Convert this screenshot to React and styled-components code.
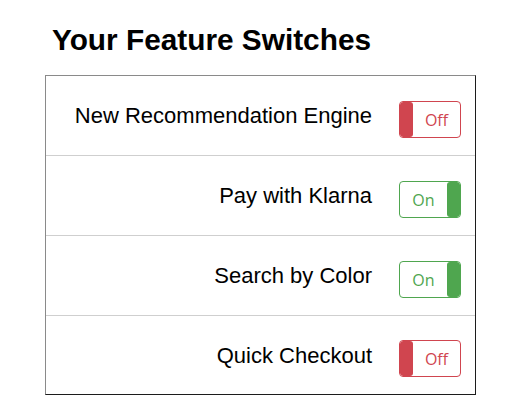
import React from 'react';
import styled, { createGlobalStyle } from 'styled-components';

const GlobalStyle = createGlobalStyle`
  body {
    margin: 0;
    background: #fff;
    font-family: "Liberation Sans", Arial, sans-serif;
    color: #000;
  }
`;

const Page = styled.div`
  padding: 24px 0 0 45px;
  width: 431px;
`;

const Title = styled.h1`
  margin: 0 0 20px 7px;
  font-size: 29.8px;
  line-height: 31px;
  font-weight: bold;
`;

const SwitchList = styled.div`
  border-style: solid;
  border-width: 1px;
  border-color: #8a8a8a #1c1c1c #1c1c1c #8a8a8a;
`;

const Row = styled.div`
  display: flex;
  align-items: center;
  justify-content: flex-end;
  gap: 27px;
  height: 79px;
  padding-right: 14px;
  border-bottom: 1px solid #cfcfcf;

  &:last-child {
    border-bottom: none;
    height: 78px;
  }
`;

const Label = styled.span`
  font-size: 22px;
  margin-top: 1px;
`;

const Toggle = styled.button`
  display: flex;
  flex-direction: ${(p) => (p.$on ? 'row-reverse' : 'row')};
  align-items: stretch;
  width: 62px;
  height: 37px;
  margin-top: 7px;
  padding: 0;
  background: #fff;
  border: 1px solid ${(p) => p.$color};
  border-radius: 4px;
  overflow: hidden;
  cursor: pointer;
`;

const Knob = styled.span`
  width: 13px;
  background: ${(p) => p.$color};
  border-radius: 3px;
`;

const ToggleText = styled.span`
  flex: 1;
  display: flex;
  align-items: center;
  justify-content: center;
  padding-top: 1px;
  font-family: "Open Sans", "Liberation Sans", sans-serif;
  font-size: 16px;
  color: ${(p) => p.$color};
`;

const RED = '#d0454f';
const GREEN = '#4fa64f';

const switches = [
  { name: 'New Recommendation Engine', on: false },
  { name: 'Pay with Klarna', on: true },
  { name: 'Search by Color', on: true },
  { name: 'Quick Checkout', on: false },
];

export default function App() {
  return (
    <Page>
      <GlobalStyle />
      <Title>Your Feature Switches</Title>
      <SwitchList>
        {switches.map((s) => {
          const color = s.on ? GREEN : RED;
          return (
            <Row key={s.name}>
              <Label>{s.name}</Label>
              <Toggle $on={s.on} $color={color}>
                <Knob $color={color} />
                <ToggleText $color={color}>{s.on ? 'On' : 'Off'}</ToggleText>
              </Toggle>
            </Row>
          );
        })}
      </SwitchList>
    </Page>
  );
}
